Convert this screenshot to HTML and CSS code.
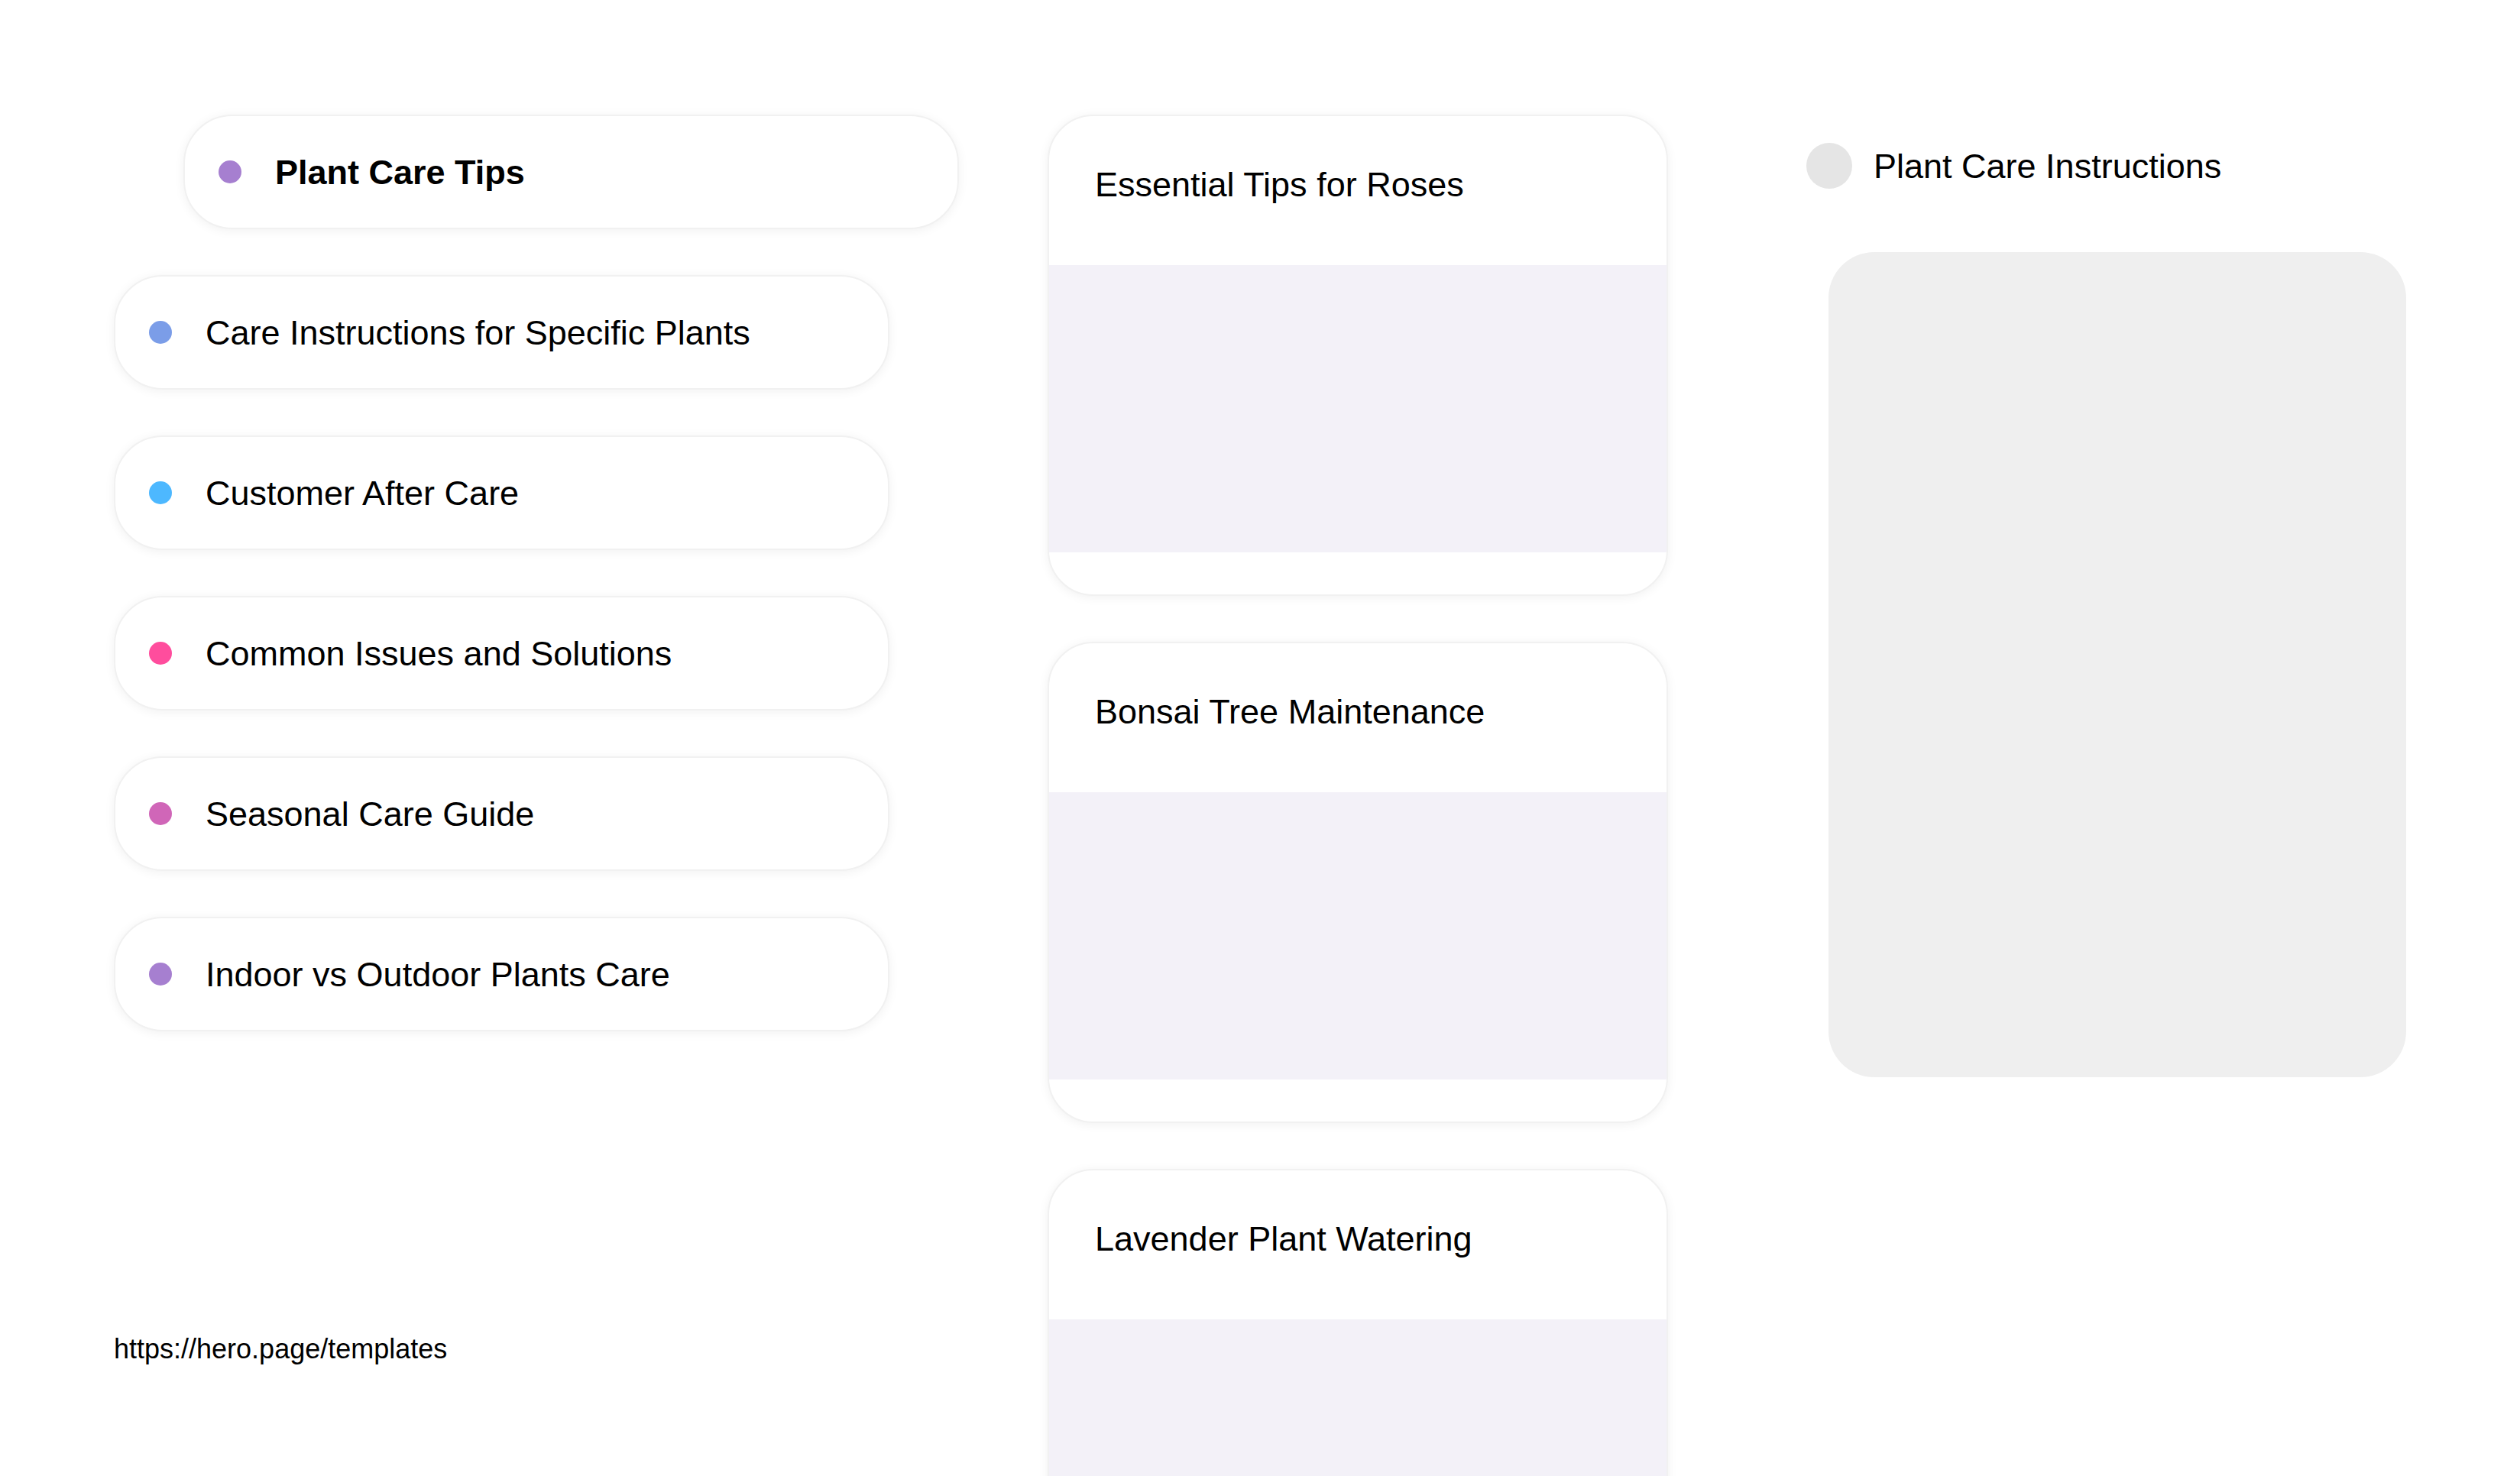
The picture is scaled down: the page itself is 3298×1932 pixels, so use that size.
FILE: index.html
```html
<!DOCTYPE html>
<html lang="en">
<head>
<meta charset="utf-8">
<title>Plant Care Tips</title>
<link rel="stylesheet" href="styles.css">
</head>
<body>
<div class="page">
  <section class="col-left">
    <div class="pill pill-main"><span class="dot dot-purple"></span><span class="pill-label bold">Plant Care Tips</span></div>
    <div class="pill"><span class="dot dot-blue"></span><span class="pill-label">Care Instructions for Specific Plants</span></div>
    <div class="pill"><span class="dot dot-sky"></span><span class="pill-label">Customer After Care</span></div>
    <div class="pill"><span class="dot dot-pink"></span><span class="pill-label">Common Issues and Solutions</span></div>
    <div class="pill"><span class="dot dot-magenta"></span><span class="pill-label">Seasonal Care Guide</span></div>
    <div class="pill"><span class="dot dot-purple"></span><span class="pill-label">Indoor vs Outdoor Plants Care</span></div>
    <div class="url">https://hero.page/templates</div>
  </section>
  <section class="col-mid">
    <div class="card"><div class="card-head">Essential Tips for Roses</div><div class="card-media"></div><div class="card-foot"></div></div>
    <div class="card"><div class="card-head">Bonsai Tree Maintenance</div><div class="card-media"></div><div class="card-foot"></div></div>
    <div class="card"><div class="card-head">Lavender Plant Watering</div><div class="card-media"></div><div class="card-foot"></div></div>
  </section>
  <section class="col-right">
    <div class="right-head"><span class="avatar"></span><span class="right-title">Plant Care Instructions</span></div>
    <div class="right-box"></div>
  </section>
</div>
</body>
</html>
```
FILE: styles.css
```css
html, body {
  margin: 0;
  padding: 0;
  background: #ffffff;
  overflow: hidden;
}
body {
  font-family: "Liberation Sans", Arial, sans-serif;
  color: #000;
}
.page {
  display: flex;
  align-items: flex-start;
  width: 3298px;
  height: 1932px;
  box-sizing: border-box;
  padding-left: 149px;
}
.col-left {
  display: flex;
  flex-direction: column;
  gap: 60px;
  width: 1106px;
  padding-top: 150px;
}
.pill {
  display: flex;
  align-items: center;
  box-sizing: border-box;
  width: 1015px;
  height: 150px;
  padding-left: 44px;
  padding-top: 2px;
  gap: 44px;
  border-radius: 64px;
  background: #fff;
  border: 2px solid #f1f1f1;
  box-shadow: 0 2px 14px rgba(0, 0, 0, 0.06);
}
.pill-main {
  margin-left: 91px;
}
.dot {
  flex: none;
  width: 30px;
  height: 30px;
  border-radius: 50%;
  margin-top: -2px;
}
.dot-purple { background: #a67fd0; }
.dot-blue { background: #7b9de8; }
.dot-sky { background: #4db8ff; }
.dot-pink { background: #ff4d9d; }
.dot-magenta { background: #d066b8; }
.pill-label {
  font-size: 45px;
  line-height: 52px;
}
.bold {
  font-weight: 700;
  font-size: 45px;
}
.url {
  margin-top: 335px;
  font-size: 36px;
  line-height: 42px;
}
.col-mid {
  display: flex;
  flex-direction: column;
  gap: 60px;
  width: 812px;
  margin-left: 116px;
  padding-top: 150px;
}
.card {
  display: flex;
  flex-direction: column;
  box-sizing: border-box;
  height: 630px;
  flex: none;
  border-radius: 60px;
  overflow: hidden;
  background: #fff;
  border: 2px solid #f1f1f1;
  box-shadow: 0 2px 14px rgba(0, 0, 0, 0.06);
}
.card-head {
  box-sizing: border-box;
  height: 195px;
  padding: 64px 60px 0;
  font-size: 45px;
  line-height: 52px;
}
.card-media {
  height: 376px;
  background: #f3f1f8;
}
.card-foot {
  flex: 1;
}
.col-right {
  display: flex;
  flex-direction: column;
  margin-left: 181px;
  padding-top: 187px;
}
.right-head {
  display: flex;
  align-items: center;
  gap: 28px;
  height: 60px;
}
.avatar {
  width: 60px;
  height: 60px;
  border-radius: 50%;
  background: #e5e5e5;
}
.right-title {
  font-size: 45px;
  line-height: 52px;
  padding-top: 2px;
}
.right-box {
  margin-top: 83px;
  margin-left: 29px;
  width: 756px;
  height: 1080px;
  border-radius: 60px;
  background: #efefef;
}
```
